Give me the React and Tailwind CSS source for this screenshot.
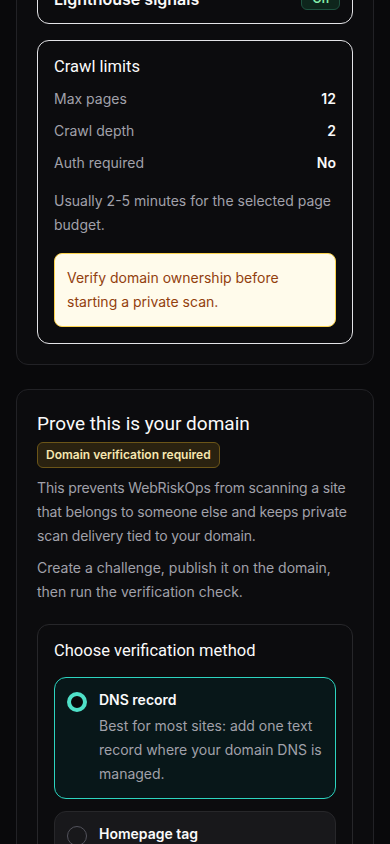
import React, { useState } from 'react';

const crawlRows = [
  { label: 'Max pages', value: '12' },
  { label: 'Crawl depth', value: '2' },
  { label: 'Auth required', value: 'No' },
];

const methods = [
  {
    id: 'dns',
    title: 'DNS record',
    description: 'Best for most sites: add one text record where your domain DNS is managed.',
  },
  {
    id: 'tag',
    title: 'Homepage tag',
    description: 'Add a meta tag to the head of your homepage.',
  },
];

const headingFont = { fontFamily: 'Roboto, "Noto Sans", sans-serif' };

function CrawlLimits() {
  return (
    <div className="rounded-xl border border-[#e4e4e7] p-4">
      <h3 className="text-[16.5px] leading-5 font-normal text-[#fafafa]" style={headingFont}>
        Crawl limits
      </h3>
      <div className="mt-3 flex flex-col gap-3">
        {crawlRows.map((row) => (
          <div key={row.label} className="flex items-center justify-between text-sm leading-5">
            <span className="text-[#a1a1aa]">{row.label}</span>
            <span className="font-semibold text-[#fafafa]">{row.value}</span>
          </div>
        ))}
      </div>
      <p className="mt-4 text-sm leading-6 text-[#a1a1aa]">
        Usually 2-5 minutes for the selected page budget.
      </p>
      <div className="mt-4 rounded-lg border border-[#fcd34d] bg-[#fffbeb] p-3 text-sm leading-6 text-[#92400e]">
        Verify domain ownership before starting a private scan.
      </div>
    </div>
  );
}

function MethodOption({ method, selected, onSelect }) {
  return (
    <button
      type="button"
      onClick={onSelect}
      className={
        selected
          ? 'flex w-full gap-3 rounded-xl border border-[#2dd4bf] bg-[#081719] p-3 text-left'
          : 'flex w-full gap-3 rounded-xl border border-[#27272a] bg-[#18181b] p-3 text-left'
      }
    >
      <span
        className={
          selected
            ? 'mt-0.5 h-5 w-5 shrink-0 rounded-full border-4 border-[#4fe0c8] bg-[#09090b]'
            : 'mt-0.5 h-5 w-5 shrink-0 rounded-full border border-[#52525b] bg-transparent'
        }
      />
      <span className="flex flex-col">
        <span className="text-sm leading-5 font-semibold text-[#fafafa]">{method.title}</span>
        <span className="mt-1 text-sm leading-6 text-[#a1a1aa]">{method.description}</span>
      </span>
    </button>
  );
}

export default function App() {
  const [method, setMethod] = useState('dns');

  return (
    <div
      className="min-h-screen overflow-hidden bg-[#09090b] px-4 pb-10"
      style={{ fontFamily: 'Inter, "Liberation Sans", sans-serif' }}
    >
      {/* scan settings card, scrolled partly out of view */}
      <div className="-mt-[47px] rounded-xl border border-[#222226] bg-[#0c0c0e] p-5">
        <div className="flex flex-col gap-4">
          <div className="flex items-center justify-between rounded-xl border border-[#e4e4e7] py-3 pl-4 pr-3">
            <span className="text-base font-semibold text-[#fafafa]">Lighthouse signals</span>
            <span className="rounded-md border border-[#1f5240] bg-[#0e261c] px-2.5 py-0.5 text-xs font-semibold text-[#86efac]">
              On
            </span>
          </div>
          <CrawlLimits />
        </div>
      </div>

      {/* domain verification */}
      <div className="mt-6 rounded-xl border border-[#222226] bg-[#0c0c0e] p-5">
        <h2 className="text-[19px] leading-7 font-normal text-[#fafafa]" style={headingFont}>
          Prove this is your domain
        </h2>
        <span className="mt-1 inline-block rounded-md border border-[#6b5518] bg-[#2a2210] px-2 py-1 text-xs leading-4 font-semibold text-[#f7e7b0]">
          Domain verification required
        </span>
        <p className="mt-2 text-sm leading-6 tracking-[-0.15px] text-[#a1a1aa]">
          This prevents WebRiskOps from scanning a site that belongs to someone else and keeps private scan
          delivery tied to your domain.
        </p>
        <p className="mt-2 text-sm leading-6 text-[#a1a1aa]">
          Create a challenge, publish it on the domain, then run the verification check.
        </p>

        <div className="mt-5 rounded-xl border border-[#27272a] p-4">
          <h3 className="text-[16.5px] leading-5 font-normal text-[#fafafa]" style={headingFont}>
            Choose verification method
          </h3>
          <div className="mt-4 flex flex-col gap-3">
            {methods.map((m) => (
              <MethodOption key={m.id} method={m} selected={method === m.id} onSelect={() => setMethod(m.id)} />
            ))}
          </div>
        </div>
      </div>
    </div>
  );
}
